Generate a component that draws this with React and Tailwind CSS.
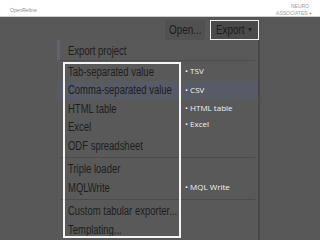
import React from 'react';

const formats = [
    { label: 'Tab-separated value' },
    { label: 'Comma-separated value', active: true },
    { label: 'HTML table' },
    { label: 'Excel' },
    { label: 'ODF spreadsheet', divider: true },
    { label: 'Triple loader' },
    { label: 'MQLWrite', divider: true },
    { label: 'Custom tabular exporter...' },
    { label: 'Templating...' },
];

const notes = {
    'Tab-separated value': 'TSV',
    'Comma-separated value': 'CSV',
    'HTML table': 'HTML table',
    'Excel': 'Excel',
    'MQLWrite': 'MQL Write',
};

// the slide is squeezed horizontally, so menu text is narrowed a bit
const Narrow = ({ children }) => (
    <span className="inline-block origin-left scale-x-[0.79] whitespace-nowrap">{children}</span>
);

export default function App() {
    return (
        <div className="w-[320px] h-[240px] overflow-hidden bg-[#575757] font-['Liberation_Sans',Arial,sans-serif] flex flex-col">
            {/* Top strip */}
            <header className="h-[17px] bg-white border-b border-[#cfcfcf] flex items-start justify-between px-[10px] shrink-0">
                <span className="text-[5px] text-[#8a8a8a] mt-[7px]">OpenRefine</span>
                <div className="text-[5px] leading-[7px] text-[#9a9a9a] text-right mt-[3px] mr-[-2px]">
                    <div className="pr-[3px]">NEURO</div>
                    <div>ASSOCIATES <span className="text-[#e05050]">+</span></div>
                </div>
            </header>

            {/* Toolbar */}
            <div className="flex justify-end items-center gap-[5px] pr-[61px] pt-[3px] h-[23px] shrink-0">
                <div className="h-[21px] w-[40px] pl-[4px] flex items-center bg-[#515151] text-[12.5px] text-[#1c1c1c]">
                    <Narrow>Open...</Narrow>
                </div>
                <div className="h-[20px] w-[49px] pl-[5px] flex items-center bg-[#4a4a4a] border border-[#f0f0f0] text-[12.5px] text-[#1c1c1c]">
                    <Narrow>Export <span className="text-[7px] align-middle">▼</span></Narrow>
                </div>
            </div>

            {/* Menu */}
            <div className="ml-[57px] w-[203px] flex-1 bg-[#595959] border-r-2 border-[#484848] flex flex-col">
                <div className="flex h-[20px] items-center shrink-0">
                    <div className="w-[3px] h-[20px] bg-[#5d6478]" />
                    <span className="ml-[8px] text-[12px] text-[#1e1e1e] mt-[2px]"><Narrow>Export project</Narrow></span>
                </div>
                <div className="h-[1px] bg-[#4d4d4d] mx-[3px]" />
                <div className="relative flex-1 pt-[1px]">
                    {formats.map(f => (
                        <React.Fragment key={f.label}>
                            <div className={`flex h-[18.5px] items-center ${f.active ? 'bg-[#565b66]' : ''}`}>
                                <span className="w-[123px] pl-[11px] text-[12px] text-[#1e1e1e] mt-[1px]">
                                    <Narrow>{f.label}</Narrow>
                                </span>
                                {notes[f.label] && (
                                    <span className={`text-[8px] text-[#f2f2f2] font-['Open_Sans',sans-serif] ml-[5px] ${f.label === 'Excel' ? '-mt-[5px]' : ''}`}>
                                        • {notes[f.label]}
                                    </span>
                                )}
                            </div>
                            {f.divider && <div className="h-[1px] bg-[#4b4b4b] mx-[3px] my-[2px]" />}
                        </React.Fragment>
                    ))}
                    {/* highlight frame around the export formats */}
                    <div className="absolute left-[6px] top-[1px] w-[118px] h-[176px] border-2 border-[#f4f4f4] pointer-events-none" />
                </div>
            </div>
        </div>
    );
}
